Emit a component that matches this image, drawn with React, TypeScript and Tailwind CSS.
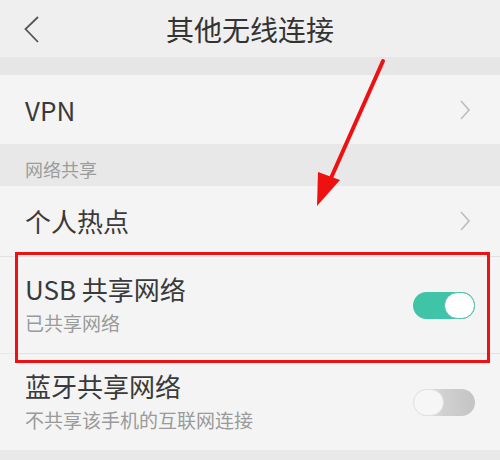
import React from 'react'

const font = { fontFamily: '"Noto Sans CJK SC", "Noto Sans", sans-serif' }

function ChevronRight() {
  return (
    <svg width="12" height="20" viewBox="0 0 12 20" className="shrink-0">
      <polyline points="2,1 10,10 2,19" fill="none" stroke="#bdbdbd" strokeWidth="1.6" />
    </svg>
  )
}

function Toggle({ on }: { on: boolean }) {
  if (on) {
    return (
      <div className="w-[62px] h-[27px] rounded-full bg-[#3fc4a8] flex items-center justify-end">
        <div className="w-[31px] h-[27px] rounded-full bg-white border border-[#4fc2a9]" />
      </div>
    )
  }
  return (
    <div className="w-[62px] h-[27px] rounded-full bg-gradient-to-r from-[#f0f0f0] via-[#d0d0d0] to-[#c4c4c4] flex items-center justify-start">
      <div className="w-[31px] h-[27px] rounded-full bg-[#f6f6f6] border border-[#e0e0e0]" />
    </div>
  )
}

function NavRow({ label }: { label: string }) {
  return (
    <div className="h-[70px] flex items-center justify-between pl-[25px] pr-[29px] bg-[#f4f4f4]">
      <span className="text-[26px] text-[#3a3a3a] leading-none">{label}</span>
      <ChevronRight />
    </div>
  )
}

function SwitchRow({ title, sub, on }: { title: string; sub: string; on: boolean }) {
  return (
    <div className="h-[96px] flex items-center justify-between pl-[25px] pr-[25px] bg-[#f4f4f4]">
      <div className="flex flex-col gap-[8px] pb-[2px]">
        <span className="text-[26px] text-[#3a3a3a] leading-[30px]">{title}</span>
        <span className="text-[19px] text-[#9a9a9a] leading-[22px]">{sub}</span>
      </div>
      <Toggle on={on} />
    </div>
  )
}

export default function App() {
  return (
    <div className="relative w-[500px] h-[460px] overflow-hidden bg-[#e9e9e9]" style={font}>
      {/* header */}
      <div className="relative h-[57px] bg-[#efefef] flex items-center justify-center">
        <svg width="16" height="28" viewBox="0 0 16 28" className="absolute left-[24px] top-[16px]">
          <polyline points="14,1 1.5,13 14,26" fill="none" stroke="#555" strokeWidth="1.8" />
        </svg>
        <span className="text-[28px] text-[#333] leading-none">其他无线连接</span>
      </div>
      <div className="h-[18px] bg-[#e6e6e6]" />

      <div className="h-[69px] flex items-center justify-between pl-[25px] pr-[29px] bg-[#f4f4f4]">
        <span className="text-[26px] text-[#3a3a3a] leading-none">VPN</span>
        <ChevronRight />
      </div>

      <div className="h-[42px] flex items-center pl-[25px] pt-[8px] bg-[#e8e8e8]">
        <span className="text-[18px] text-[#9c9c9c] leading-none">网络共享</span>
      </div>

      <NavRow label="个人热点" />
      <div className="h-px bg-[#e2e2e2]" />
      <SwitchRow title="USB 共享网络" sub="已共享网络" on />
      <div className="h-px bg-[#e2e2e2] ml-[18px]" />
      <SwitchRow title="蓝牙共享网络" sub="不共享该手机的互联网连接" on={false} />

      {/* annotation overlay */}
      <div className="absolute left-[15px] top-[252px] w-[475px] h-[111px] border-[3px] border-[#ee1111]" />
      <svg className="absolute left-0 top-0" width="500" height="460" viewBox="0 0 500 460">
        <line x1="383" y1="61" x2="331" y2="178" stroke="#ee1111" strokeWidth="4" strokeLinecap="round" />
        <polygon points="318,172 340,180 317,206" fill="#ee1111" />
      </svg>
    </div>
  )
}
